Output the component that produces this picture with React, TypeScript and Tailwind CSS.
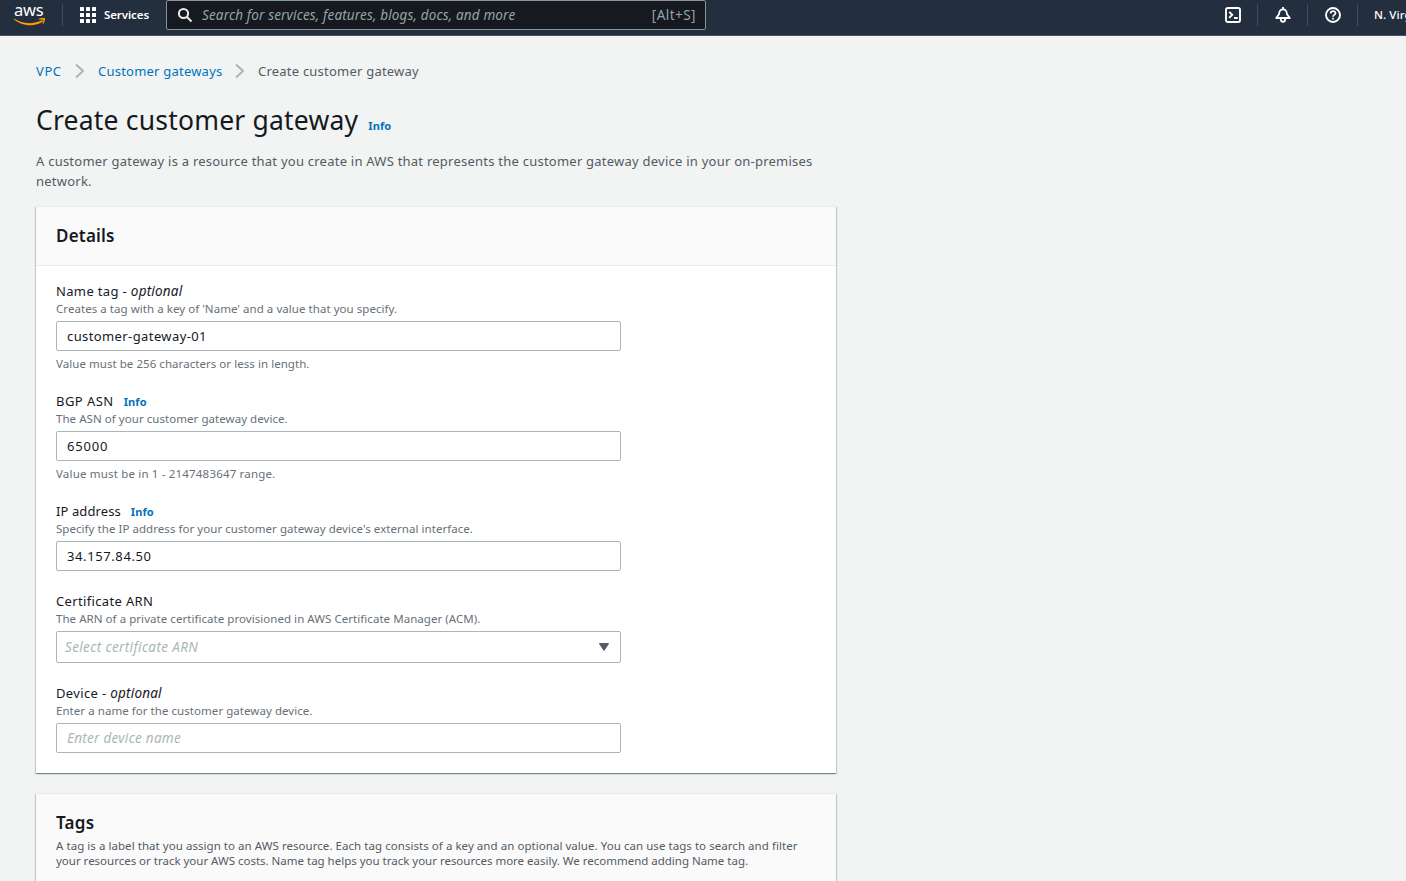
import type { ReactNode } from "react";

function Info({ className = "" }: { className?: string }) {
  return <a className={`text-[11px] font-bold tracking-[0.1px] text-[#0073bb] ${className}`}>Info</a>;
}

function Label({ text, optional, info, tracking = "tracking-[0.35px]" }: { text: string; optional?: boolean; info?: boolean; tracking?: string }) {
  return (
    <div className="flex h-5 items-baseline text-[13px] leading-5 text-[#16191f]">
      <span className={`whitespace-pre ${tracking}`}>
        {text}
        {optional && (
          <>
            {" - "}
            <i className="text-[13.5px] tracking-[0.2px]">optional</i>
          </>
        )}
      </span>
      {info && <Info className="ml-2.5" />}
    </div>
  );
}

function Field(props: {
  label: string;
  labelTracking?: string;
  constraintTracking?: string;
  optional?: boolean;
  info?: boolean;
  hint: string;
  constraint?: string;
  children: ReactNode;
}) {
  return (
    <div className="w-[565px]">
      <Label text={props.label} optional={props.optional} info={props.info} tracking={props.labelTracking} />
      <p className="h-4 text-[11.5px] leading-4 tracking-[0.05px] whitespace-nowrap text-[#687078]">{props.hint}</p>
      <div className="mt-1">{props.children}</div>
      {props.constraint && (
        <p
          className={`mt-1 h-4 text-[11.5px] leading-[17px] whitespace-nowrap text-[#687078] ${props.constraintTracking ?? "tracking-[0.05px]"}`}
        >
          {props.constraint}
        </p>
      )}
    </div>
  );
}

function TextBox({ value, placeholder, tracking = "tracking-[0.4px]" }: { value?: string; placeholder?: string; tracking?: string }) {
  return (
    <div
      className={`flex h-[30px] items-center rounded-xs border border-[#aab7b8] bg-white px-2.5 text-[13px] text-[#16191f] ${tracking}`}
    >
      {value ? <span className="pt-px">{value}</span> : <i className="text-[13.5px] text-[#aab7b8]">{placeholder}</i>}
    </div>
  );
}

function Divider() {
  return <div className="h-[22px] w-px shrink-0 bg-[#414d5c]" />;
}

function Chevron() {
  return (
    <svg width="10" height="16" viewBox="0 0 10 16" fill="none" stroke="#aab7b8" strokeWidth="2">
      <path d="M1 1.5 8 8l-7 6.5" />
    </svg>
  );
}

function TopBar() {
  return (
    <header className="flex h-9 shrink-0 border-b border-[#4a5461] bg-[#232f3e] pb-[5px] text-white">
      <div className="flex w-[62px] shrink-0 flex-col pl-3.5">
        <span className="h-[18px] text-[16.5px] leading-5 tracking-[-0.2px]">aws</span>
        <svg width="32" height="9" viewBox="0 0 32 9" className="shrink-0">
          <path d="M0 0.5C8 6 19 6.6 28 2.3c1-.4 1.6.5.8 1.2C21 9.3 7 8.3 0 1.3-.4.8-.2.2 0 .5Z" fill="#ff9900" />
          <path d="M24.5.9c2-1.200 5.800-1.100 6.300-.6.5.7-.2 4.400-1.900 6-.4.3-.7.1-.5-.3.5-1.200 1.300-3.500.9-4.100-.4-.6-3-.4-4.300-.3-.6.1-.8-.4-.5-.7Z" fill="#ff9900" />
        </svg>
      </div>
      <div className="flex items-center">
        <Divider />
        <div className="ml-[17px] grid grid-cols-3 gap-[2px]">
          {Array.from({ length: 9 }, (_, i) => (
            <span key={i} className="size-1 rounded-[0.5px] bg-white" />
          ))}
        </div>
        <span className="ml-2 w-[62px] text-[11.5px] font-semibold tracking-[-0.1px]">Services</span>
      </div>
      <div className="flex h-[30px] w-[540px] shrink-0 items-center rounded-xs border border-[#879596] bg-[#16191f] pr-[9px] pl-2.5 text-[13.5px] text-[#95a5a6]">
        <svg width="16" height="16" viewBox="0 0 16 16" fill="none" stroke="#eaeded" strokeWidth="2">
          <circle cx="6.500" cy="6.500" r="4.600" />
          <path d="m10 10 4.500 4.500" />
        </svg>
        <i className="ml-[9px] tracking-[0.15px]">Search for services, features, blogs, docs, and more</i>
        <span className="ml-auto tracking-[0.45px]">[Alt+S]</span>
      </div>
      <div className="ml-auto flex w-[181px] shrink-0 items-center overflow-hidden">
        <svg className="shrink-0" width="16" height="16" viewBox="0 0 16 16" fill="none" stroke="white" strokeWidth="1.900">
          <rect x="1" y="1" width="14" height="14" rx="1.8" />
          <path d="m4.200 4.800 3 3-3 3M9 11h3.800" />
        </svg>
        <div className="ml-4"><Divider /></div>
        <svg className="ml-[17px] shrink-0" width="16" height="16" viewBox="0 0 16 16" fill="none" stroke="white" strokeWidth="1.8">
          <path d="M8 0v2M1.200 11h13.600L12 7.300C11.800 4 10.500 2.300 8 2.300S4.200 4 4 7.300ZM5.700 11.500c0 4.500 4.600 4.500 4.600 0" strokeLinejoin="round" />
        </svg>
        <div className="ml-4"><Divider /></div>
        <svg className="ml-[17px] shrink-0" width="16" height="16" viewBox="0 0 16 16" fill="none" stroke="white" strokeWidth="1.9">
          <circle cx="8" cy="8" r="7" />
          <path d="M5.600 6.500c0-3.200 4.900-3 4.900-.2 0 1.700-2.500 1.500-2.500 3.400M8 10.700v1.900" strokeWidth="1.7" />
        </svg>
        <div className="ml-4"><Divider /></div>
        <span className="ml-4 text-[11.5px] font-medium tracking-[0.1px] whitespace-nowrap">N. Virginia</span>
      </div>
    </header>
  );
}

const card =
  "w-[800px] border-t border-[#eaeded] shadow-[0_1px_1px_0_rgba(0,28,36,0.3),1px_1px_1px_0_rgba(0,28,36,0.15),-1px_1px_1px_0_rgba(0,28,36,0.15)]";

export default function App() {
  return (
    <div
      className="flex h-[881px] w-[1406px] flex-col overflow-hidden bg-[#f2f3f3] text-[#16191f]"
      style={{ fontFamily: '"Noto Sans", sans-serif' }}
    >
      <TopBar />
      <main className="flex w-[837px] flex-col pl-9">
        <nav className="mt-[25px] flex h-5 items-center text-[13px] leading-5 tracking-[0.22px] text-[#0073bb]">
          <a className="w-[39px] tracking-[0.6px]">VPC</a>
          <Chevron />
          <a className="ml-[13px] w-[137px]">Customer gateways</a>
          <Chevron />
          <span className="ml-[13px] text-[#545b64]">Create customer gateway</span>
        </nav>
        <div className="mt-[21px] flex h-9 items-baseline leading-9">
          <h1 className="text-[26.5px] tracking-[0.2px]">Create customer gateway</h1>
          <Info className="ml-2.5" />
        </div>
        <p className="mt-[13px] h-10 text-[13px] leading-5 tracking-[0.237px] whitespace-nowrap text-[#545b64]">
          A customer gateway is a resource that you create in AWS that represents the customer gateway device in your on-premises
          <br />
          network.
        </p>
        <section className={`mt-[15px] h-[567px] bg-white ${card}`}>
          <div className="flex h-[59px] items-center border-b border-[#eaeded] bg-[#fafafa] px-5">
            <h2 className="text-[17px] font-semibold tracking-[0.2px]">Details</h2>
          </div>
          <div className="flex flex-col gap-5 px-5 pt-[15px]">
            <Field
              label="Name tag"
              optional
              hint="Creates a tag with a key of 'Name' and a value that you specify."
              constraint="Value must be 256 characters or less in length."
            >
              <TextBox value="customer-gateway-01" />
            </Field>
            <Field
              label="BGP ASN"
              labelTracking="tracking-[0.45px]"
              constraintTracking="tracking-[0.18px]"
              info
              hint="The ASN of your customer gateway device."
              constraint="Value must be in 1 - 2147483647 range."
            >
              <TextBox value="65000" tracking="tracking-[0.8px]" />
            </Field>
            <Field
              label="IP address"
              labelTracking="tracking-[0.1px]"
              info
              hint="Specify the IP address for your customer gateway device's external interface."
            >
              <TextBox value="34.157.84.50" tracking="tracking-[0.6px]" />
            </Field>
            <Field label="Certificate ARN" hint="The ARN of a private certificate provisioned in AWS Certificate Manager (ACM).">
              <div className="flex h-8 items-center justify-between rounded-xs border border-[#aab7b8] bg-white pr-[11px] pl-2 text-[13.5px] tracking-[0.36px] text-[#aab7b8]">
                <i>Select certificate ARN</i>
                <svg width="10" height="8" viewBox="0 0 10 8">
                  <path d="M.5 0h9c.5 0 .6.5.3.9L5.500 7.600q-.5.7-1 0L.2.9C-.1.5 0 0 .5 0Z" fill="#545b64" />
                </svg>
              </div>
            </Field>
            <Field label="Device" optional hint="Enter a name for the customer gateway device.">
              <TextBox placeholder="Enter device name" tracking="tracking-[0.27px]" />
            </Field>
          </div>
        </section>
        <section className={`mt-5 h-[120px] bg-[#fafafa] px-5 pt-[18px] ${card}`}>
          <h2 className="text-[17px] leading-[22px] font-semibold tracking-[0.3px]">Tags</h2>
          <p className="mt-1 text-[11.5px] leading-[15px] whitespace-nowrap text-[#545b64]">
            <span className="tracking-[0.05px]">
              A tag is a label that you assign to an AWS resource. Each tag consists of a key and an optional value. You can use tags to search and filter
            </span>
            <br />
            <span className="tracking-[-0.01px]">
              your resources or track your AWS costs. Name tag helps you track your resources more easily. We recommend adding Name tag.
            </span>
          </p>
        </section>
      </main>
    </div>
  );
}
